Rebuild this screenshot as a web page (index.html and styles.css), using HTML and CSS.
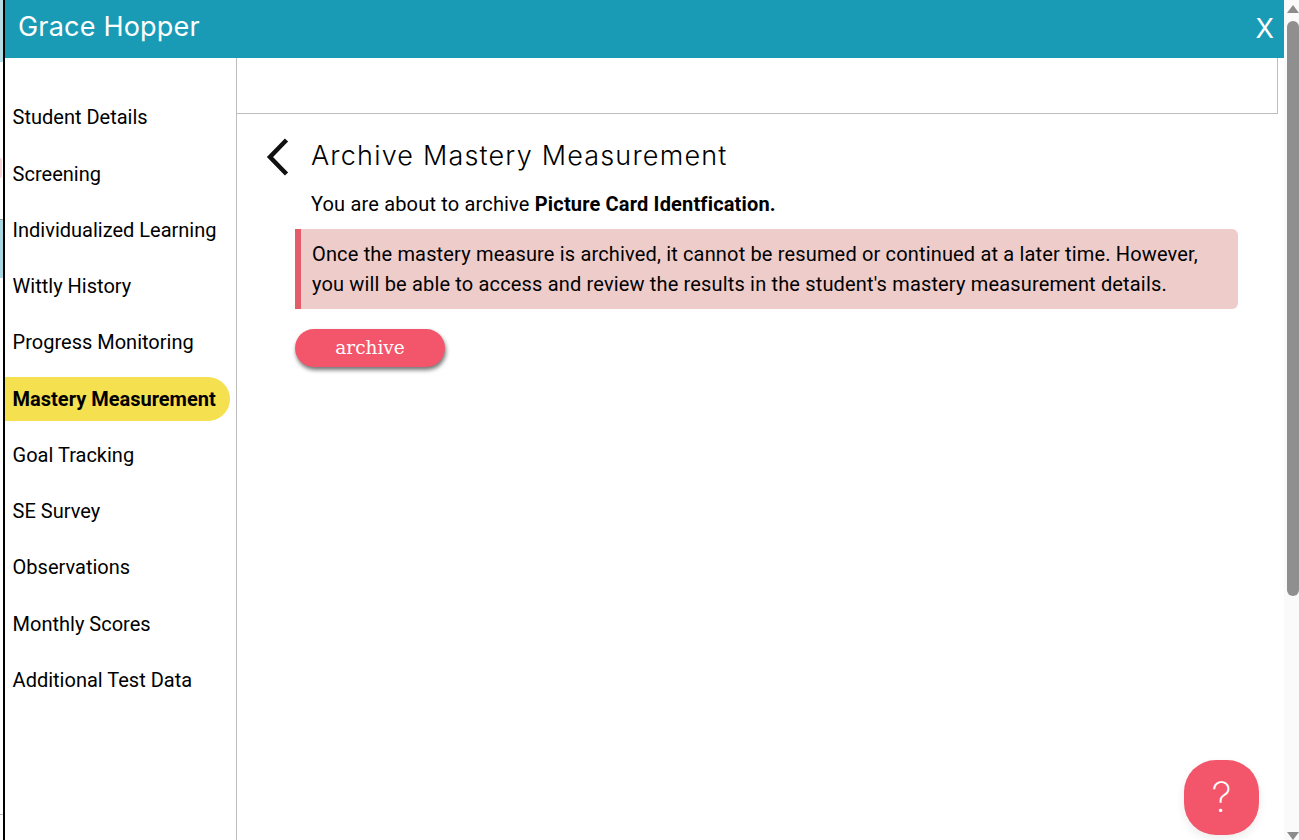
FILE: index.html
```html
<!DOCTYPE html>
<html lang="en">
<head>
<meta charset="utf-8">
<title>Grace Hopper</title>
<link rel="stylesheet" href="styles.css">
</head>
<body>
<div class="backdrop">
  <span class="peek peek-blue"></span>
  <span class="peek peek-pink"></span>
  <span class="peek peek-cyan"></span>
  <span class="peek peek-line"></span>
</div>
<div class="modal">
  <header class="modal-header">
    <h1 class="modal-title">Grace Hopper</h1>
    <span class="modal-close">X</span>
  </header>
  <div class="modal-body">
    <nav class="sidebar">
      <a class="nav-item">Student Details</a>
      <a class="nav-item">Screening</a>
      <a class="nav-item">Individualized Learning</a>
      <a class="nav-item">Wittly History</a>
      <a class="nav-item">Progress Monitoring</a>
      <a class="nav-item active">Mastery Measurement</a>
      <a class="nav-item">Goal Tracking</a>
      <a class="nav-item">SE Survey</a>
      <a class="nav-item">Observations</a>
      <a class="nav-item">Monthly Scores</a>
      <a class="nav-item">Additional Test Data</a>
    </nav>
    <main class="content">
      <div class="top-box"></div>
      <section class="panel">
        <div class="panel-head">
          <svg class="back" width="24" height="38" viewBox="0 0 24 38"><path d="M21.5 2 L5 19 L21.5 36" fill="none" stroke="#111" stroke-width="4.5"/></svg>
          <h2 class="panel-title">Archive Mastery Measurement</h2>
        </div>
        <p class="intro">You are about to archive <b>Picture Card Identfication.</b></p>
        <div class="alert">Once the mastery measure is archived, it cannot be resumed or continued at a later time. However, you will be able to access and review the results in the student's mastery measurement details.</div>
        <button class="archive-btn">archive</button>
      </section>
    </main>
  </div>
</div>
<button class="help">?</button>
<div class="scrollbar">
  <span class="arrow-up"></span>
  <span class="thumb"></span>
  <span class="arrow-down"></span>
</div>
</body>
</html>
```
FILE: styles.css
```css
* { box-sizing: border-box; }
html, body { margin: 0; height: 100%; overflow: hidden; background: #fff; }
body { font-family: Roboto, sans-serif; color: #000; display: flex; }

.backdrop { width: 3px; flex: none; position: relative; }
.peek { position: absolute; left: 0; width: 3px; }
.peek-blue { top: 0; height: 62px; background: #b5dde5; }
.peek-pink { top: 158px; height: 20px; width: 2px; border-radius: 0 10px 10px 0; background: #f9d5d8; }
.peek-cyan { top: 219px; height: 59px; background: #aad8e2; border-top: 1px solid #999; }
.peek-line { top: 814px; height: 1px; background: #bbb; }

.modal { width: 1281px; height: 840px; flex: none; border-left: 2px solid #000; display: flex; flex-direction: column; }
.modal-header { height: 58px; flex: none; background: #199bb6; color: #fff; display: flex; align-items: center; justify-content: space-between; padding: 0 10px 0 13px; }
.modal-title { margin: 0 0 5px; font: 400 27px/32px Inter, sans-serif; letter-spacing: .2px; }
.modal-close { font: 400 27px/32px Inter, sans-serif; }

.modal-body { flex: 1; display: flex; min-height: 0; }
.sidebar { width: 232px; flex: none; border-right: 1px solid #bdbdbd; padding-top: 37.4px; padding-right: 6px; display: flex; flex-direction: column; }
.nav-item { height: 44px; margin-bottom: 12.25px; padding-left: 7.6px; display: flex; align-items: center; font-size: 20px; }
.nav-item.active { background: #f5e04f; font-weight: 700; border-radius: 0 22px 22px 0; }

.content { flex: 1; min-width: 0; display: flex; flex-direction: column; }
.top-box { height: 56px; flex: none; margin-right: 6px; border: 1px solid #bdbdbd; border-width: 0 1px 1px 0; }
.panel { padding: 20px 46px 0 58px; }
.panel-head { height: 44px; position: relative; display: flex; align-items: center; padding-left: 16px; }
.back { position: absolute; left: -30px; top: 4px; }
.panel-title { margin: 0; font: 300 27px/36px Inter, sans-serif; letter-spacing: 1.18px; }
.intro { margin: 12px 0 0 16px; font-size: 20px; line-height: 28px; letter-spacing: .17px; }
.alert { margin-top: 11px; height: 80px; background: #eeccca; border-left: 6px solid #e25c6b; border-radius: 0 6px 6px 0; padding: 10px 10px 0 11px; font-size: 20px; line-height: 30px; letter-spacing: .16px; }
.archive-btn { display: block; margin-top: 20px; width: 150px; height: 38px; border: 0; border-radius: 19px; background: #f3556a; color: #fff; font: 400 18.5px/38px "DejaVu Serif", serif; box-shadow: 1px 3px 4px rgba(0,0,0,.55); padding: 0; }

.help { position: absolute; left: 1184px; top: 760px; width: 75px; height: 75px; border: 0; border-radius: 32px; background: #f3556a; color: #fff; font: 200 41px/75px Inter, sans-serif; padding: 0; box-shadow: 0 4px 10px rgba(0,0,0,.08); }

.scrollbar { flex: 1; background: #fafafa; padding-left: 3px; display: flex; flex-direction: column; align-items: center; position: relative; }
.arrow-up { margin-top: 5px; width: 0; height: 0; border: 6px solid transparent; border-top: 0; border-bottom: 8px solid #8c8c8c; }
.thumb { margin-top: 8px; width: 12px; height: 575px; background: #8f8f8f; border-radius: 6px; flex: none; }
.arrow-down { position: absolute; bottom: 0; left: 3px; width: 0; height: 0; border: 6px solid transparent; border-bottom: 0; border-top: 8px solid #8c8c8c; }
```
